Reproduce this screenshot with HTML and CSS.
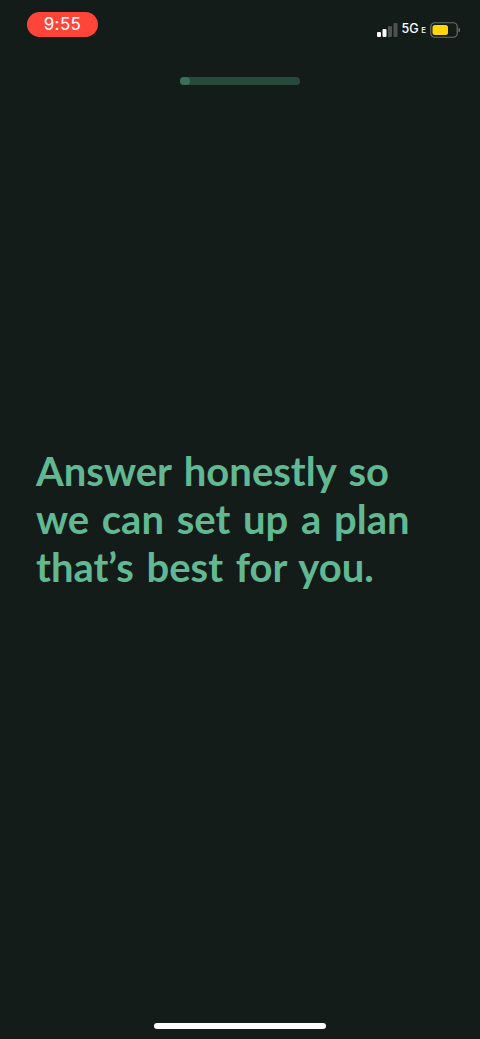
FILE: index.html
```html
<!DOCTYPE html>
<html lang="en">
<head>
    <meta charset="UTF-8">
    <meta name="viewport" content="width=device-width, initial-scale=1.0">
    <title>Onboarding</title>
    <link rel="stylesheet" href="styles.css">
</head>
<body>
    <div class="screen">
        <div class="status-bar">
            <div class="time-pill">9:55</div>
            <div class="status-icons">
                <svg class="signal" width="21" height="14" viewBox="0 0 21 14">
                    <rect x="0" y="9" width="4" height="5" rx="1" fill="#ffffff"/>
                    <rect x="5.5" y="6" width="4" height="8" rx="1" fill="#ffffff"/>
                    <rect x="11" y="3" width="4" height="11" rx="1" fill="#4d524f"/>
                    <rect x="16.5" y="0" width="4" height="14" rx="1" fill="#4d524f"/>
                </svg>
                <span class="network">5G<span class="network-e">E</span></span>
                <svg class="battery" width="30" height="16" viewBox="0 0 30 16">
                    <rect x="0.75" y="0.75" width="26.5" height="14.5" rx="4" fill="none" stroke="#6b6f6d" stroke-width="1.2"/>
                    <rect x="2.5" y="3" width="15.5" height="10" rx="2.5" fill="#ffd60a"/>
                    <rect x="28.5" y="6" width="1.5" height="4" rx="0.75" fill="#6b6f6d"/>
                </svg>
            </div>
        </div>

        <div class="progress">
            <div class="progress-fill"></div>
        </div>

        <div class="message">
            <h1>Answer honestly so we can set up a plan that’s best for you.</h1>
        </div>

        <div class="home-row">
            <div class="home-indicator"></div>
        </div>
    </div>
</body>
</html>
```

FILE: styles.css
```css
* {
    box-sizing: border-box;
}

body {
    margin: 0;
    background-color: #131c19;
    font-family: "Liberation Sans", Arial, sans-serif;
}

.screen {
    display: flex;
    flex-direction: column;
    height: 1039px;
    overflow: hidden;
}

.status-bar {
    display: flex;
    justify-content: space-between;
    align-items: flex-start;
    height: 77px;
    padding: 12px 20px 0 27px;
}

.time-pill {
    width: 71px;
    height: 25px;
    line-height: 25px;
    border-radius: 13px;
    background-color: #ff453a;
    color: #fff;
    font-family: Inter, sans-serif;
    font-size: 17px;
    letter-spacing: 0.4px;
    text-align: center;
}

.status-icons {
    display: flex;
    align-items: center;
    gap: 4px;
    padding-top: 9px;
}

.network {
    color: #fff;
    font-family: Inter, sans-serif;
    font-size: 12.5px;
    font-weight: 500;
    line-height: 16px;
}

.network-e {
    margin-left: 2.5px;
    font-size: 8px;
}

.progress {
    align-self: center;
    width: 120px;
    height: 8px;
    border-radius: 4px;
    background-color: #264a3c;
}

.progress-fill {
    width: 10px;
    height: 8px;
    border-radius: 4px;
    background-color: #3a7058;
}

.message {
    flex: 1;
    display: flex;
    align-items: center;
    padding: 0 36px 70px;
}

h1 {
    margin: 0;
    color: #62b892;
    font-family: Lato, sans-serif;
    font-size: 40px;
    font-weight: 700;
    line-height: 48px;
    word-spacing: 3px;
}

.home-row {
    display: flex;
    justify-content: center;
    height: 16px;
}

.home-indicator {
    width: 172px;
    height: 6px;
    border-radius: 3px;
    background-color: #fff;
}
```
